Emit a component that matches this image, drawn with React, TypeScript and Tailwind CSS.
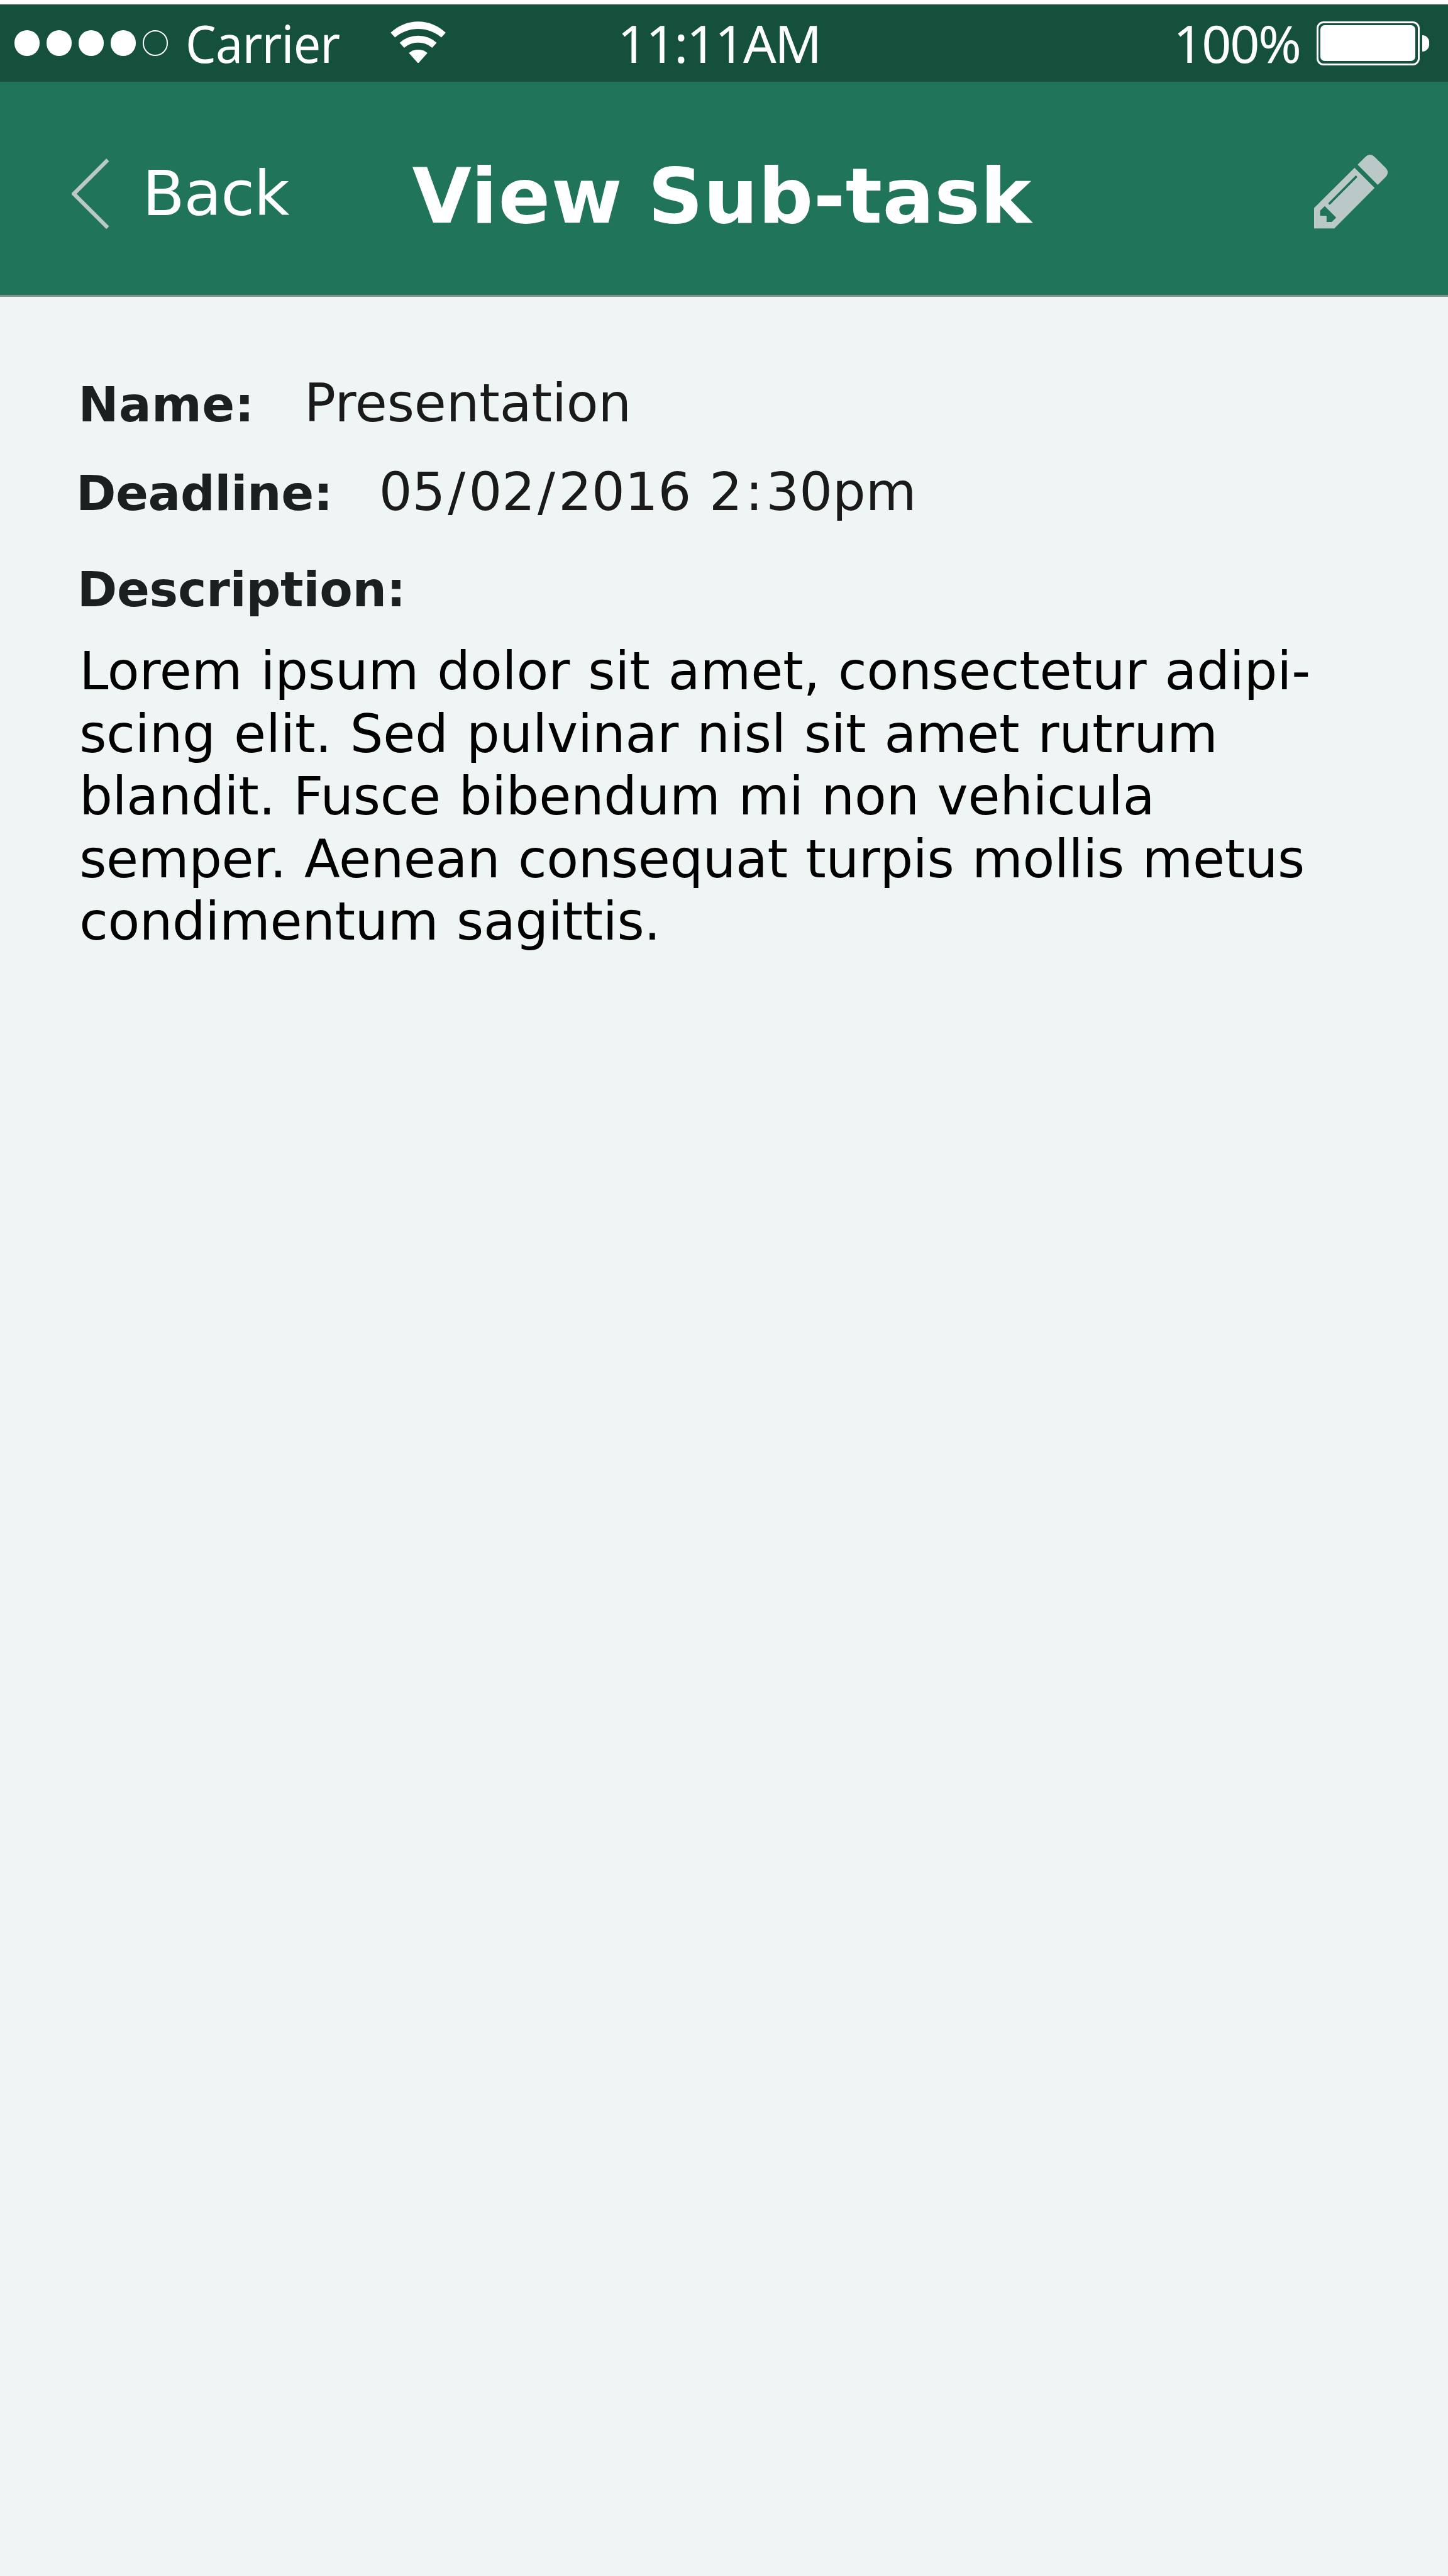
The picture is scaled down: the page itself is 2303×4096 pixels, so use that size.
function SignalDots() {
  return (
    <div className="mt-[2px] flex gap-[11px]">
      {[0, 1, 2, 3].map((i) => (
        <span key={i} className="size-[40.1px] rounded-full bg-white" />
      ))}
      <span className="size-[40.1px] rounded-full border-2 border-white" />
    </div>
  );
}

function WifiIcon() {
  return (
    <svg viewBox="843 47 119.4 90.7" className="-mt-px h-[66.8px] w-[88px] fill-white">
      <path d="M843.3 71.6A85.2 85.2 0 0 1 962.3 71.6L952.8 81.6A77.5 77.5 0 0 0 852.8 81.6Z" />
      <path d="M862.8 93.2A59.6 59.6 0 0 1 942.8 93.2L933 104A46 46 0 0 0 872.6 104Z" />
      <path d="M882.7 115.4A31 31 0 0 1 922.9 115.4L902.8 137.7Z" />
    </svg>
  );
}

function BatteryIcon() {
  return (
    <div className="mt-[2px] flex items-center">
      <div className="h-[70px] w-[164.2px] rounded-[11px] border-[3.7px] border-white p-[3.7px]">
        <div className="h-full w-full rounded-[7px] bg-white" />
      </div>
      <div className="ml-[3.9px] h-[26px] w-[11.1px] rounded-r-full bg-white" />
    </div>
  );
}

function BackChevron() {
  return (
    <svg viewBox="155.1 341.7 80.8 152.3" className="h-[112.3px] w-[59.5px] fill-[#bac8c8]">
      <path d="M230.1 341.7L235.9 347.7L165.8 418L235.9 488L230.1 494L155.1 419.5V416.3Z" />
    </svg>
  );
}

function PencilIcon() {
  return (
    <svg viewBox="168 104 477 477" className="h-[117.2px] w-[117.2px] fill-[#bac8c8]">
      <path d="M450 168L500 118Q514 104 530 104Q546 104 560 118L631 188Q645 202 645 218Q645 234 631 249L580 299Z" />
      <path
        fillRule="evenodd"
        d="M430 188L560 319L299 581H168V449ZM433 243L263 414A7.5 7.5 0 0 0 274 425L445 253A7.5 7.5 0 0 0 433 243ZM237 437L207 466V499H249V540H282L311 511Z"
      />
    </svg>
  );
}

function StatusBar() {
  return (
    <div className="flex h-[123px] items-center bg-[#14503c] pr-[30.3px] pb-[2px] pl-[22.5px] font-['Noto_Sans'] text-[82.6px] leading-[100px] whitespace-nowrap text-white">
      <SignalDots />
      <div className="ml-[28px] w-[326.3px]">
        <span className="inline-block origin-left scale-x-[0.935] tracking-[-0.9px]">Carrier</span>
      </div>
      <WifiIcon />
      <div className="ml-[273px] tracking-[-2.3px]">11:11AM</div>
      <div className="ml-auto w-[227.3px] tracking-[-2.24px]">100%</div>
      <BatteryIcon />
    </div>
  );
}

function Header() {
  return (
    <header className="flex h-[342px] items-center border-b-[3px] border-[#889090] bg-[#1f745a] pt-[17px] pr-[95.6px] pl-[114.3px] whitespace-nowrap text-white">
      <BackChevron />
      <div className="ml-[52.8px] w-[428.9px] text-[98px] leading-[120px] tracking-[-1.3px]">Back</div>
      <h1 className="mt-[7px] text-[122px] leading-[150px] font-bold [word-spacing:-3px]">
        <span className="tracking-[1.5px]">View</span> <span className="tracking-[0.4px]">Sub-task</span>
      </h1>
      <div className="-mt-[6px] ml-auto">
        <PencilIcon />
      </div>
    </header>
  );
}

const description = [
  { text: "Lorem ipsum dolor sit amet, consectetur adipi-", tracking: "tracking-[-0.12px]" },
  { text: "scing elit. Sed pulvinar nisl sit amet rutrum", tracking: "tracking-[-0.1px]" },
  { text: "blandit. Fusce bibendum mi non vehicula", tracking: "tracking-[-0.3px]" },
  { text: "semper. Aenean consequat turpis mollis metus", tracking: "tracking-[-0.39px]" },
  { text: "condimentum sagittis.", tracking: "tracking-[-0.38px]" },
];

export default function App() {
  return (
    <div className="h-[4096px] w-[2303px] overflow-hidden bg-[#eff4f5] font-['DejaVu_Sans',sans-serif]">
      <div className="h-[7px] bg-white" />
      <StatusBar />
      <Header />
      <main className="pt-[120px] whitespace-nowrap text-[#1a1a1a]">
        <div className="flex h-[141px] items-baseline pl-[124.4px] leading-[100px]">
          <div className="w-[359.7px] text-[76.6px] font-bold tracking-[0.41px] text-[#1a1f1f]">Name:</div>
          <div className="text-[83px] tracking-[-0.11px]">Presentation</div>
        </div>
        <div className="flex h-[155px] items-baseline pl-[120.9px] leading-[100px]">
          <div className="w-[481.9px] text-[76.6px] font-bold tracking-[-0.4px] text-[#1a1f1f]">Deadline:</div>
          <div className="text-[83px] [word-spacing:2.2px]">
            05<span className="mr-[5.3px] ml-[3.8px]">/</span>02<span className="mr-[5.3px] ml-[3.8px]">/</span>2016 2
            <span className="mx-[4.8px]">:</span>30pm
          </div>
        </div>
        <div className="h-[130px] pl-[122.7px] text-[76.6px] leading-[100px] font-bold tracking-[-0.3px] text-[#1a1f1f]">
          Description:
        </div>
        <div className="pl-[126.2px] text-[83px] leading-[99.5px] [word-spacing:2.8px] text-black">
          {description.map((line) => (
            <p key={line.text} className={line.tracking}>
              {line.text}
            </p>
          ))}
        </div>
      </main>
    </div>
  );
}
